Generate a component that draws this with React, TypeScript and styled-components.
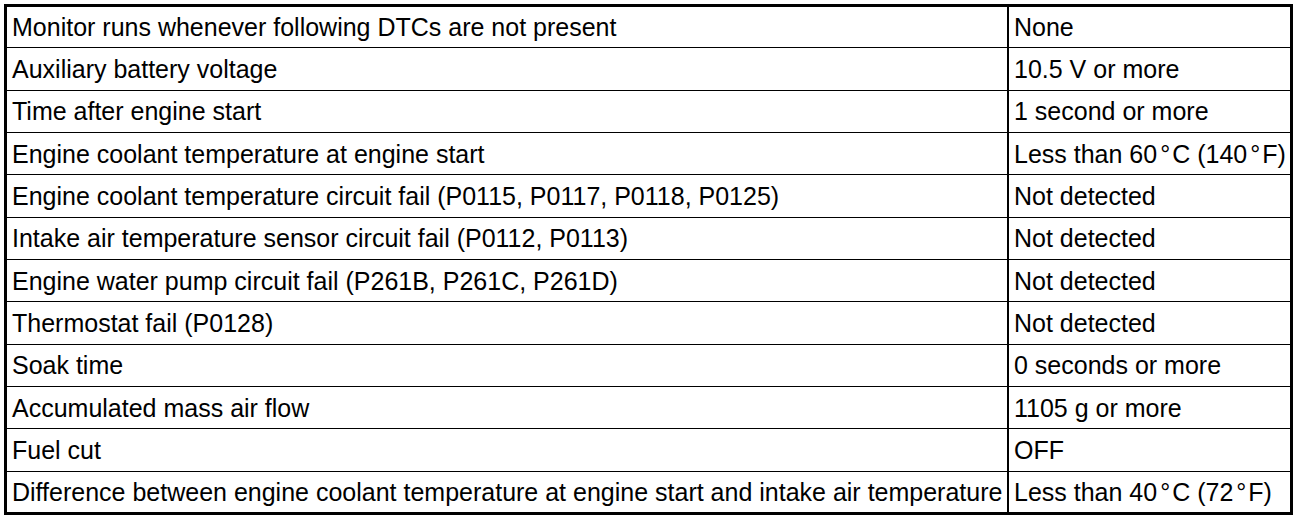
import styled, { createGlobalStyle } from 'styled-components';

const GlobalStyle = createGlobalStyle`
  html, body {
    margin: 0;
    padding: 0;
    background: #ffffff;
  }
`;

const rows: [string, string][] = [
  ['Monitor runs whenever following DTCs are not present', 'None'],
  ['Auxiliary battery voltage', '10.5 V or more'],
  ['Time after engine start', '1 second or more'],
  ['Engine coolant temperature at engine start', 'Less than 60\u00b0C (140\u00b0F)'],
  ['Engine coolant temperature circuit fail (P0115, P0117, P0118, P0125)', 'Not detected'],
  ['Intake air temperature sensor circuit fail (P0112, P0113)', 'Not detected'],
  ['Engine water pump circuit fail (P261B, P261C, P261D)', 'Not detected'],
  ['Thermostat fail (P0128)', 'Not detected'],
  ['Soak time', '0 seconds or more'],
  ['Accumulated mass air flow', '1105 g or more'],
  ['Fuel cut', 'OFF'],
  [
    'Difference between engine coolant temperature at engine start and intake air temperature',
    'Less than 40\u00b0C (72\u00b0F)',
  ],
];

const Page = styled.div`
  padding: 4px 0 0 4px;
`;

const Table = styled.table`
  border-collapse: collapse;
  border: 3px solid #000;
  font-family: 'Liberation Sans', Arial, Helvetica, sans-serif;
  font-size: 25px;
  color: #000;
`;

const Row = styled.tr`
  height: 42.35px;
  border-bottom: 1px solid #000;
`;

const Cell = styled.td<{ $value?: boolean }>`
  padding: 1px 4px 0 5px;
  white-space: nowrap;
  vertical-align: middle;
  width: ${(p) => (p.$value ? '272px' : '991px')};
  border-left: ${(p) => (p.$value ? '2px solid #000' : 'none')};
`;

const DegSign = styled.span`
  margin: 0 2px 0 3px;
`;

// the source document sets the degree sign apart from the number and unit
const Deg = ({ text }: { text: string }) => (
  <>
    {text.split('\u00b0').map((part, i) => (
      <span key={i}>
        {i > 0 && <DegSign>{'\u00b0'}</DegSign>}
        {part}
      </span>
    ))}
  </>
);

const App = () => (
  <>
    <GlobalStyle />
    <Page>
      <Table>
        <tbody>
          {rows.map(([cond, value]) => (
            <Row key={cond}>
              <Cell>{cond}</Cell>
              <Cell $value>
                <Deg text={value} />
              </Cell>
            </Row>
          ))}
        </tbody>
      </Table>
    </Page>
  </>
);

export default App;
